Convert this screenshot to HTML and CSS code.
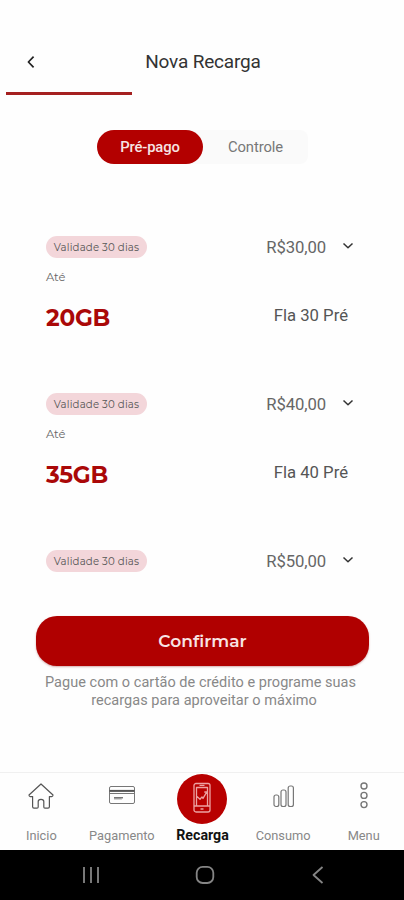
FILE: index.html
```html
<!DOCTYPE html>
<html lang="pt-BR">
<head>
<meta charset="utf-8">
<title>Nova Recarga</title>
<link rel="stylesheet" href="styles.css">
</head>
<body>
<div class="screen">
  <header class="header">
    <svg class="back" viewBox="0 0 10 14"><path d="M7.6 1.6 2.4 7l5.2 5.4"/></svg>
    <h1 class="title">Nova Recarga</h1>
  </header>
  <div class="progress"></div>
  <div class="toggle">
    <span class="option active">Pré-pago</span>
    <span class="option">Controle</span>
  </div>
  <main class="plans">
    <section class="plan">
      <div class="row"><span class="badge">Validade 30 dias</span><span class="price">R$30,00</span><svg class="chevron" viewBox="0 0 12 8"><path d="m1.5 1.5 4.5 4.3 4.5-4.3"/></svg></div>
      <div class="upto">Até</div>
      <div class="row details"><strong class="data">20GB</strong><span class="name">Fla 30 Pré</span></div>
    </section>
    <section class="plan">
      <div class="row"><span class="badge">Validade 30 dias</span><span class="price">R$40,00</span><svg class="chevron" viewBox="0 0 12 8"><path d="m1.5 1.5 4.5 4.3 4.5-4.3"/></svg></div>
      <div class="upto">Até</div>
      <div class="row details"><strong class="data">35GB</strong><span class="name">Fla 40 Pré</span></div>
    </section>
    <section class="plan last">
      <div class="row"><span class="badge">Validade 30 dias</span><span class="price">R$50,00</span><svg class="chevron" viewBox="0 0 12 8"><path d="m1.5 1.5 4.5 4.3 4.5-4.3"/></svg></div>
    </section>
  </main>
  <button class="confirm">Confirmar</button>
  <p class="note"><span>Pague com o cartão de crédito e programe suas</span><br><span class="line-two">recargas para aproveitar o máximo</span></p>
  <nav class="tabs">
    <div class="tab"><div class="icon"><svg width="28" height="28" viewBox="0 0 28 28" class="home"><path d="M14 2 2 13q.1 2.3 3.6 1.5v10.3q0 1.4 1.4 1.4h3q1.2 0 1.2-1.2v-5.5q0-2.2 2.8-2.2t2.8 2.2V25q0 1.2 1.2 1.2h3q1.4 0 1.4-1.4V14.5Q25.9 15.3 26 13Z"/></svg></div><span class="tab-label">Inicio</span></div>
    <div class="tab"><div class="icon card-slot"><svg width="28" height="20" viewBox="0 0 28 20" class="card"><rect x="1.5" y="1.5" width="25" height="17" rx="1.5"/><path class="stripe" d="M1.5 5.9h25"/><path d="M1.5 8.5h25M6 12.5h9l-1.5 1.3H6"/></svg></div><span class="tab-label">Pagamento</span></div>
    <div class="tab"><div class="circle"><svg width="20" height="32" viewBox="0 0 20 32"><rect x="2" y="1.5" width="16" height="28.5" rx="2"/><path d="M4.5 5.5h11V24h-11ZM7.5 3.4h5M2 24h16M8.5 27h3M5 14.5l3 2.7 2-2.3 1 1.5 4-6.8M12.2 10.2l2.8-.6"/></svg></div><span class="tab-label recarga">Recarga</span></div>
    <div class="tab"><div class="icon"><svg width="24" height="26" viewBox="0 0 24 26" class="bars"><rect x="2" y="12" width="4.8" height="11.5" rx="2"/><rect x="9" y="7" width="5" height="16.5" rx="2"/><rect x="16.2" y="3" width="5.2" height="20.5" rx="2"/></svg></div><span class="tab-label">Consumo</span></div>
    <div class="tab"><div class="icon"><svg width="12" height="28" viewBox="0 0 12 28" class="dots"><circle cx="6" cy="4" r="3"/><circle cx="6" cy="13.4" r="3"/><circle cx="6" cy="22.6" r="3"/></svg></div><span class="tab-label">Menu</span></div>
  </nav>
  <footer class="system">
    <svg width="20" height="20" viewBox="0 0 20 20"><path d="M3 2v16M10 2v16M17 2v16"/></svg>
    <svg width="20" height="20" viewBox="0 0 20 20"><rect x="1.7" y="1.8" width="16.6" height="16.2" rx="6"/></svg>
    <svg width="20" height="20" viewBox="0 0 20 20"><path d="M14.5 2 5.5 10l9 8"/></svg>
  </footer>
</div>
</body>
</html>
```
FILE: styles.css
```css
* { box-sizing: border-box; }
body { margin: 0; background: #fefefe; font-family: Roboto, "Liberation Sans", sans-serif; color: #555; }
.screen { width: 404px; height: 900px; overflow: hidden; display: flex; flex-direction: column; }
svg { display: block; flex: none; fill: none; stroke: #777; stroke-width: 1; stroke-linejoin: round; }
.header { height: 92px; padding: 31px 24px 0 26px; display: grid; grid-template-columns: 10px 1fr 10px; align-items: center; }
.back { width: 10px; height: 14px; stroke: #222; stroke-width: 1.7; }
.title { margin: 0; font-size: 19px; font-weight: 400; text-align: center; color: #333; letter-spacing: -.18px; }
.progress { width: 126px; height: 3px; margin-left: 6px; background: #a52020; flex: none; }
.toggle { width: 211px; height: 34px; margin: 35px 0 0 97px; border-radius: 17px 8px 8px 17px; background: #fafafa; display: flex; flex: none; }
.option { width: 105px; height: 34px; font-size: 14.8px; line-height: 35px; text-align: center; color: #777; letter-spacing: -.1px; }
.active { width: 106px; border-radius: 17px; background: #b30000; color: #f7e4e4; font-weight: 500; letter-spacing: -.15px; }
.plans { padding: 72px 50px 0 46px; flex: none; }
.plan { height: 157px; }
.last { height: 66px; }
.row { display: flex; align-items: center; }
.badge { width: 101px; height: 22px; border-radius: 11px; background: #f3d6da; color: #555; font: 10.2px/23px Montserrat, Inter, sans-serif; text-align: center; letter-spacing: .18px; white-space: nowrap; }
.price { margin-left: auto; font-size: 16.7px; line-height: 23px; height: 22px; color: #666; letter-spacing: -.1px; }
.chevron { width: 12px; height: 8px; margin: -3px 0 0 16px; stroke: #333; stroke-width: 1.5; }
.upto { margin-top: 11px; font: 11.5px/16px Montserrat, Inter, sans-serif; color: #666; letter-spacing: -.1px; }
.details { justify-content: space-between; margin-top: 19px; padding-right: 6px; line-height: 28px; }
.data { font: 700 23.2px/28px Montserrat, Inter, sans-serif; color: #aa0808; letter-spacing: -.25px; }
.name { margin-top: -5px; font-size: 16.7px; color: #555; }
.confirm { width: 333px; height: 50px; margin: 0 0 0 36px; padding: 0; border: 0; border-radius: 21px; background: #b00000; box-shadow: 0 1px 2px #b9777799; color: #f8e4e4; font: 600 17px/51px Montserrat, Inter, sans-serif; letter-spacing: .02px; flex: none; }
.note { margin: 8px 0 0; padding-right: 3px; text-align: center; font-size: 14.5px; line-height: 17.5px; color: #888; white-space: nowrap; letter-spacing: .04px; }
.line-two { padding-left: 7px; }
.tabs { height: 78px; margin-top: auto; padding: 0 0 0 1px; border-top: 1px solid #f0f0f0; display: grid; grid-template-columns: repeat(5, 80.6px); flex: none; }
.tab { display: flex; flex-direction: column; align-items: center; }
.icon { height: 46px; display: flex; align-items: center; }
.card-slot { padding-bottom: 2px; }
.home { stroke: #555; stroke-width: 1.2; }
.card .stripe { stroke: #555; stroke-width: 2; }
.bars { stroke-width: 1.2; margin-left: 1px; }
.dots { stroke-width: 1.4; }
.circle { width: 50px; height: 50px; margin-top: 1px; border-radius: 50%; background: #b80000; display: grid; place-items: center; }
.circle svg { stroke: #eda2a2; stroke-width: 1.3; margin-top: -2px; }
.tab-label { font-size: 12.8px; line-height: 16px; margin-top: 9px; color: #888; }
.recarga { margin-top: 3px; color: #111; font-size: 14.2px; font-weight: 700; }
.system { height: 50px; background: #000; display: flex; align-items: center; justify-content: space-between; padding: 0 76px 0 81px; flex: none; }
.system svg { stroke: #858585; stroke-width: 1.8; }
```
